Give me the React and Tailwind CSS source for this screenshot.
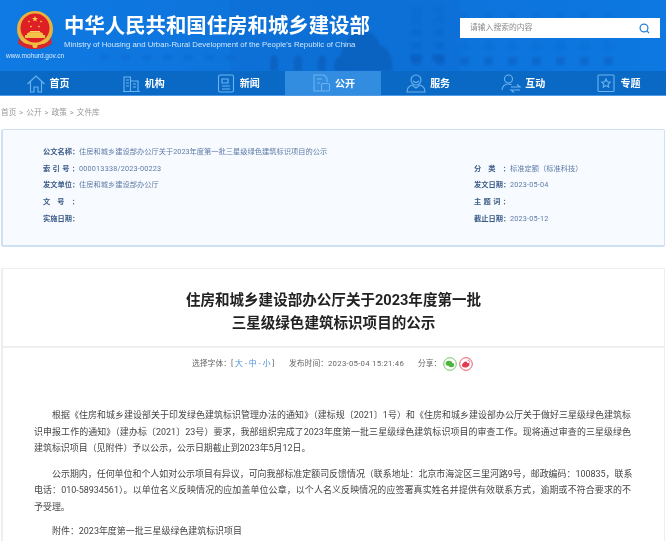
const FONT = { fontFamily: 'Roboto, "Noto Sans CJK SC", "Liberation Sans", sans-serif' };

const C = "\uFF0C";
const K = "\uFF1A";
const L = "\uFF08";
const R = "\uFF09";
const P = "\u3002";

const P1 = [
  `根据《住房和城乡建设部关于印发绿色建筑标识管理办法的通知》${L}建标规〔2021〕1号${R}和《住房和城乡建设部办公厅关于做好三星级绿色建筑标`,
  `识申报工作的通知》${L}建办标〔2021〕23号${R}要求${C}我部组织完成了2023年度第一批三星级绿色建筑标识项目的审查工作${P}现将通过审查的三星级绿色`,
  `建筑标识项目${L}见附件${R}予以公示${C}公示日期截止到2023年5月12日${P}`,
];
const P2 = [
  `公示期内${C}任何单位和个人如对公示项目有异议${C}可向我部标准定额司反馈情况${L}联系地址${K}北京市海淀区三里河路9号${C}邮政编码${K}100835${C}联系`,
  `电话${K}010-58934561${R}${P}以单位名义反映情况的应加盖单位公章${C}以个人名义反映情况的应签署真实姓名并提供有效联系方式${C}逾期或不符合要求的不`,
  `予受理${P}`,
];
const P3 = [`附件${K}2023年度第一批三星级绿色建筑标识项目`];

function Para({ lines, className = "" }) {
  return (
    <div className={className}>
      {lines.map((t, i) => (
        <div
          key={i}
          className={`whitespace-nowrap ${i === 0 ? "pl-[18px]" : ""} ${i < lines.length - 1 ? "text-justify [text-align-last:justify] [white-space:normal] h-[16.700px]" : ""}`}
        >
          {t}
        </div>
      ))}
    </div>
  );
}

function Star({ x, y, r }) {
  const pts = [];
  for (let i = 0; i < 10; i++) {
    const a = -Math.PI / 2 + (i * Math.PI) / 5;
    const rr = i % 2 ? r * 0.42 : r;
    pts.push(`${(x + rr * Math.cos(a)).toFixed(2)},${(y + rr * Math.sin(a)).toFixed(2)}`);
  }
  return <polygon points={pts.join(" ")} fill="#fbd84a" />;
}

function Emblem() {
  return (
    <svg width="38" height="40" viewBox="0 0 38 40" className="block">
      <circle cx="19" cy="18" r="18" fill="#e9b23c" />
      <circle cx="19" cy="17" r="14.5" fill="#df1f26" />
      <Star x={19} y={8} r={3} />
      <Star x={13} y={10.5} r={1.3} />
      <Star x={25} y={10.5} r={1.3} />
      <Star x={15} y={15.5} r={1.3} />
      <Star x={23} y={15.5} r={1.3} />
      <rect x="14" y="20" width="10" height="1.4" fill="#f8d76a" />
      <path d="M11 24h16v-1.500l-2-1.300H13l-2 1.300z" fill="#f6c445" />
      <rect x="9" y="24" width="20" height="3" fill="#f3c24a" />
      <path d="M3 27c3 5 8 7 16 7s13-2 16-7l1 5c-4 4-10 6-17 6S6 36 2 32z" fill="#d8262a" />
      <path d="M5 27c3 4 8 6 14 6s11-2 14-6" stroke="#efbd45" strokeWidth="1.600" fill="none" />
      <circle cx="19" cy="34.500" r="2.600" fill="#efbd45" />
    </svg>
  );
}

function HeaderArt() {
  const windows = [];
  for (let r = 0; r < 4; r++) {
    for (let c = 0; c < 9; c++) {
      windows.push(<rect key={`a${r}${c}`} x={412 + c * 24} y={12 + r * 15} width="9" height="8" fill="#0a5cba" opacity={r === 3 ? 0.45 : 0.14} />);
    }
  }
  for (let r = 0; r < 5; r++) {
    for (let c = 0; c < 2; c++) {
      windows.push(<rect key={`b${r}${c}`} x={410 + c * 22} y={6 + r * 12} width="12" height="7" fill="#0a5cba" opacity={r > 3 ? 0.6 : 0.15} />);
    }
  }
  const low = [];
  for (let c = 0; c < 7; c++) {
    low.push(<rect key={`l${c}`} x={100 + c * 21} y="55" width="9" height="5" fill="#0a5cba" opacity="0.22" />);
  }
  return (
    <svg className="absolute inset-0 blur-[1px]" width="666" height="71" viewBox="0 0 666 71">
      <rect x="230" y="0" width="230" height="71" fill="#0b66c6" opacity="0.2" />
      <path d="M270 71V58q4-5 8 0v13zM294 71V58q4-5 8 0v13zM318 71V58q4-5 8 0v13z" fill="#0a56ad" opacity="0.5" />
      <path d="M335 71c-3-8 1-13 6-16 2-12 10-24 22-24 12 1 14 9 17 14 9 3 14 14 12 26z" fill="#0a5bb4" opacity="0.65" />
      {windows}
      {low}
    </svg>
  );
}

const ICON = "#6cb4f0";
function NavIcon({ name }) {
  const p = { fill: "none", stroke: ICON, strokeWidth: 1.1 };
  const paths = {
    home: <><path {...p} d="M1.500 11 10 3l8.500 8M4.500 9v10h3.500v-5h4v5h3.500V9" /></>,
    org: <><path {...p} d="M2 18.500h17M3 18V4h6.500v14M9.500 8H17v10.500" /><path {...p} d="M5 7h3M5 10h3M5 13h3M12 11h3M12 14h3" /></>,
    news: <><rect {...p} x="2.500" y="2" width="15" height="17" rx="1.500" /><path {...p} d="M6 6h6v4H6zM6 13h8M6 16h8" /></>,
    open: <><path {...p} d="M10 18H3V2h10l3 3v4" /><path {...p} d="M6 6h5M6 10h3" /><rect {...p} x="10.500" y="10.500" width="8" height="7.500" rx="1" /></>,
    serv: <><circle {...p} cx="10" cy="7" r="5" /><path {...p} d="M7 8c2 2 4 2 6 0M6 12c-3 1-5 3-5 7h18c0-4-2-6-5-7l-4 3z" /></>,
    talk: <><circle {...p} cx="7.500" cy="6" r="4" /><path {...p} d="M1 17c.5-4 3-6 6.500-6 1 0 2 .2 3 .7M10 14h9l-3-2.500M19 17h-9l3 2.500" /></>,
    star: <><rect {...p} x="2" y="2" width="16" height="16.500" rx="1" /><path {...p} d="m10 6 1.300 2.700 3 .4-2.200 2 .6 3-2.700-1.500-2.700 1.500.6-3-2.200-2 3-.4z" /></>,
  };
  return (
    <svg width="20" height="21" viewBox="0 0 20 21" className="block shrink-0">
      {paths[name]}
    </svg>
  );
}

const NAV = [
  ["home", "首页"],
  ["org", "机构"],
  ["news", "新闻"],
  ["open", "公开"],
  ["serv", "服务"],
  ["talk", "互动"],
  ["star", "专题"],
];

function Nav() {
  return (
    <nav className="grid grid-cols-7 h-[24px] bg-[#0a69c4] border-b border-[#4f9be8] box-content">
      {NAV.map(([icon, label]) => (
        <div key={label} className={`flex items-center justify-center gap-[4px] text-white font-bold text-[10px] ${label === "公开" ? "bg-[#328ce0]" : ""}`}>
          <NavIcon name={icon} />
          <span>{label}</span>
        </div>
      ))}
    </nav>
  );
}

function Header() {
  return (
    <header className="w-[666px]">
      <div className="relative h-[71px] bg-gradient-to-r from-[#0f7ae3] via-[#0d72d9] to-[#0d78e1] flex overflow-hidden">
        <HeaderArt />
        <div className="relative w-[64px] shrink-0 flex flex-col items-center pt-[11px] pl-[6px]">
          <Emblem />
          <div className="text-[#d6eafc] text-[6.500px] leading-none mt-[2px] whitespace-nowrap" style={{ fontFamily: '"Liberation Sans", sans-serif' }}>www.mohurd.gov.cn</div>
        </div>
        <div className="relative pt-[13px] w-[396px] shrink-0">
          <div className="text-white font-bold text-[20.400px] leading-[26px] whitespace-nowrap">中华人民共和国住房和城乡建设部</div>
          <div className="text-[#cfe6fc] text-[7.800px] leading-[10px] mt-[1px] whitespace-nowrap" style={{ fontFamily: '"Liberation Sans", sans-serif' }}>Ministry of Housing and Urban-Rural Development of the People's Republic of China</div>
        </div>
        <div className="relative pt-[18px]">
          <div className="w-[200px] h-[20px] bg-white flex items-center justify-between pl-[10px] pr-[10px]">
            <span className="text-[#8a8a8a] text-[7.800px]">请输入搜索的内容</span>
            <svg width="11" height="11" viewBox="0 0 11 11">
              <circle cx="5" cy="5" r="3.900" fill="none" stroke="#2f7fd6" strokeWidth="1.300" />
              <path d="m8 8 2 2" stroke="#2f7fd6" strokeWidth="1.300" />
            </svg>
          </div>
        </div>
      </div>
      <Nav />
    </header>
  );
}

function Info({ label, value, numeric }) {
  return (
    <div className="flex h-[16.700px] items-center">
      <span className="w-[36px] shrink-0 font-semibold text-[#3a5a86] flex justify-between">
        {[...label].map((c, i) => <span key={i}>{c}</span>)}
      </span>
      <span className={`text-[#5f7ba6] whitespace-nowrap ${numeric ? "tracking-[0.2px]" : ""}`}>{value}</span>
    </div>
  );
}

function InfoBox() {
  return (
    <section className="mx-[1px] h-[118px] bg-[#f7faff] border border-l-2 border-b-2 border-[#cfe0f3] rounded-[2px] pl-[40px] pt-[14px] text-[7.250px]">
      <Info label={`公文名称${K}`} value="住房和城乡建设部办公厅关于2023年度第一批三星级绿色建筑标识项目的公示" />
      <div className="grid grid-cols-[431px_1fr]">
        <Info label={`索引号${K}`} value="000013338/2023-00223" numeric />
        <Info label={`分类${K}`} value={`标准定额${L}标准科技${R}`} />
        <Info label={`发文单位${K}`} value="住房和城乡建设部办公厅" />
        <Info label={`发文日期${K}`} value="2023-05-04" numeric />
        <Info label={`文号${K}`} value="" />
        <Info label={`主题词${K}`} value="" />
        <Info label={`实施日期${K}`} value="" />
        <Info label={`截止日期${K}`} value="2023-05-12" numeric />
      </div>
    </section>
  );
}

function Share() {
  return (
    <div className="flex gap-[2px]">
      <svg width="14" height="14" viewBox="0 0 14 14">
        <circle cx="7" cy="7" r="6.300" fill="#fff" stroke="#63bd55" strokeWidth="0.900" />
        <ellipse cx="6" cy="6.300" rx="3.300" ry="2.600" fill="#4fb33f" />
        <ellipse cx="8.400" cy="8" rx="2.800" ry="2.200" fill="#4fb33f" />
      </svg>
      <svg width="14" height="14" viewBox="0 0 14 14">
        <circle cx="7" cy="7" r="6.300" fill="#fff" stroke="#e8455c" strokeWidth="0.900" />
        <path d="M3 8.500c0-2 2.500-4 4-4 1.200 0 1.300 1 1 1.700 1.500-.5 2.700 0 2.500 1.200C10.300 9.500 8 10.500 6 10.500c-1.600 0-3-.7-3-2z" fill="#e23a52" />
        <path d="M8.500 3.200c1.300-.2 2.500.9 2.300 2.300" stroke="#e23a52" strokeWidth="0.800" fill="none" />
      </svg>
    </div>
  );
}

function Article() {
  return (
    <article className="mt-[21px] mx-[1px] h-[300px] border border-[#eeeeee] border-l-2 pt-[20px]">
      <h1 className="text-center font-bold text-[14.550px] leading-[23px] text-[#222]">
        住房和城乡建设部办公厅关于2023年度第一批<br />三星级绿色建筑标识项目的公示
      </h1>
      <div className="mt-[11px] border-t-2 border-[#efefef] h-[34px] flex items-center pl-[189px] text-[7.800px] text-[#666] whitespace-nowrap">
        <span className="w-[97px]">
          选择字体{K}[ <span className="text-[#4a90d9]">大 - 中 - 小</span> ]
        </span>
        <span className="w-[129px]">发布时间{K}<span className="tracking-[0.25px]">2023-05-04 15:21:46</span></span>
        <span className="w-[25px]">分享{K}</span>
        <Share />
      </div>
      <div className="mt-[27px] pl-[31px] pr-[33px] text-[8.950px] leading-[16.700px] text-[#444]">
        <Para lines={P1} />
        <Para lines={P2} className="mt-[8.500px]" />
        <Para lines={P3} className="mt-[7.500px]" />
      </div>
    </article>
  );
}

function Breadcrumb() {
  const items = ["首页", "公开", "政策", "文件库"];
  return (
    <div className="h-[33px] flex items-center gap-[3px] pl-[1px] text-[7.650px] text-[#999] whitespace-nowrap">
      {items.map((t, i) => (
        <span key={t} className="flex items-center gap-[3px]">
          {i > 0 && <span>&gt;</span>}
          <span>{t}</span>
        </span>
      ))}
    </div>
  );
}

export default function App() {
  return (
    <div className="w-[667px] h-[541px] overflow-hidden bg-white blur-[0.25px]" style={FONT}>
      <Header />
      <div className="w-[666px]">
        <Breadcrumb />
        <InfoBox />
        <Article />
      </div>
    </div>
  );
}
